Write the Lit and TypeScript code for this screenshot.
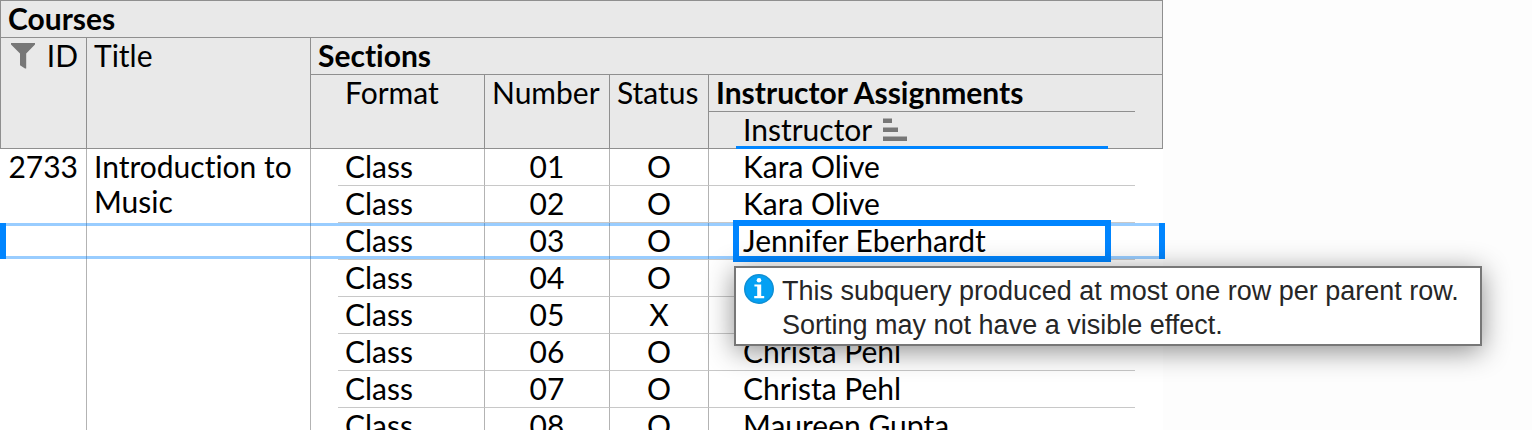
import { LitElement, html, css, nothing } from "lit";
import { customElement, state } from "lit/decorators.js";

interface Section {
  format: string;
  number: string;
  status: string;
  instructor: string;
}

@customElement("info-tip")
class InfoTip extends LitElement {
  static styles = css`
    :host {
      display: flex;
      gap: 8px;
      box-sizing: border-box;
      padding: 6px 21px 2px 8px;
      border: 2px solid #777;
      background: #fff;
      box-shadow: 0 5px 28px rgba(0, 0, 0, 0.45);
      color: #262626;
      font: 27px/34px "Liberation Sans", Arial, sans-serif;
      white-space: nowrap;
    }
    .icon {
      flex: none;
      width: 30px;
      height: 30px;
    }
  `;

  render() {
    return html`
      <svg class="icon" viewBox="0 0 30 30" aria-hidden="true">
        <circle cx="15" cy="15" r="14.25" fill="#04a0f3" stroke="#0f8fd4" stroke-width="1.5" />
        <circle cx="15" cy="6.3" r="2.3" fill="#fff" />
        <path d="M10.4 10.4H17.2V21.9H20.2V24.2H10.2V21.9H13.2V12.6H10.4Z" fill="#fff" />
      </svg>
      <div><slot></slot></div>
    `;
  }
}

@customElement("app-root")
class AppRoot extends LitElement {
  static styles = css`
    :host {
      display: block;
      height: 100vh;
      overflow: hidden;
      background: #fdfdfd;
      color: #000;
      font: 30px/35px Lato, Carlito, sans-serif;
      font-variant-ligatures: none;
      --accent: #0085ff;
      --head-line: #8f8f8f;
      --column-line: #b3b3b3;
      --row-line: #c8c8c8;
    }
    .grid {
      border-collapse: separate;
      border-spacing: 0;
      table-layout: fixed;
      width: 0;
      background: #fff;
    }
    .col-id { width: 87px; }
    .col-title { width: 224px; }
    .col-gutter { width: 27px; }
    .col-format { width: 147px; }
    .col-number { width: 125px; }
    .col-status { width: 99px; }
    .col-instructor { width: 372px; }
    .col-end { width: 28px; }

    th,
    td {
      box-sizing: border-box;
      height: 37px;
      padding: 0 7px;
      border: 0 solid var(--head-line);
      text-align: left;
      vertical-align: top;
      font-weight: 400;
      white-space: nowrap;
    }
    th {
      background: #e9e9e9;
      border-bottom-width: 1px;
    }
    .group { font-weight: 700; }
    .courses {
      height: 38px;
      border-width: 1px;
    }
    .edge { border-right-width: 1px; }
    .first { border-left-width: 1px; }
    .right {
      text-align: right;
      padding-right: 8px;
    }
    .center { text-align: center; }
    .indent { padding-left: 34px; }
    .pad { padding: 0; }
    .id-head {
      display: flex;
      justify-content: space-between;
      padding-left: 3px;
    }
    .filter {
      width: 24px;
      height: 26px;
      margin-top: 5px;
    }
    .sort-head {
      display: flex;
      gap: 11px;
      height: 34px;
    }
    .sort {
      width: 24px;
      height: 23px;
      margin-top: 6px;
    }
    .sorted { border-bottom: 3px solid var(--accent); }

    td { border-color: var(--row-line); }
    td.edge { border-right-color: var(--column-line); }
    .title { white-space: normal; }
    .ruled { border-bottom-width: 1px; }

    .selected,
    .focused { position: relative; }
    .row-mark,
    .cell-mark {
      position: absolute;
      box-sizing: border-box;
      pointer-events: none;
    }
    .row-mark {
      inset: 0 -2px 1px 0;
      border: solid rgba(0, 130, 255, 0.4);
      border-width: 3px 0;
    }
    .row-mark::before,
    .row-mark::after {
      content: "";
      position: absolute;
      top: -3px;
      bottom: -3px;
      width: 6px;
      background: var(--accent);
    }
    .row-mark::before { left: 0; }
    .row-mark::after { right: 0; }
    .focused { z-index: 1; background: #fff; }
    .cell-mark {
      inset: -3px;
      border: 6px solid var(--accent);
    }
    .tip {
      position: absolute;
      top: 43px;
      left: -2px;
    }
  `;

  @state() private selected = 2;

  private sections: Section[] = [
    { format: "Class", number: "01", status: "O", instructor: "Kara Olive" },
    { format: "Class", number: "02", status: "O", instructor: "Kara Olive" },
    { format: "Class", number: "03", status: "O", instructor: "Jennifer Eberhardt" },
    { format: "Class", number: "04", status: "O", instructor: "" },
    { format: "Class", number: "05", status: "X", instructor: "" },
    { format: "Class", number: "06", status: "O", instructor: "Christa Pehl" },
    { format: "Class", number: "07", status: "O", instructor: "Christa Pehl" },
    { format: "Class", number: "08", status: "O", instructor: "Maureen Gupta" },
  ];

  private row(s: Section, i: number) {
    const on = i === this.selected;
    return html`
      <tr class=${on ? "selected" : ""}>
        ${i === 0
          ? html`
              <td class="edge right" rowspan=${this.sections.length}>2733</td>
              <td class="edge title" rowspan=${this.sections.length}>Introduction to Music</td>
            `
          : nothing}
        <td class="pad"></td>
        <td class="ruled edge">${s.format}</td>
        <td class="ruled edge center">${s.number}</td>
        <td class="ruled edge center">${s.status}</td>
        <td class="ruled pad">${on ? html`<span class="row-mark"></span>` : nothing}</td>
        <td class="ruled ${on ? "focused" : ""}">${s.instructor}${on
            ? html`<span class="cell-mark"></span>
                <info-tip class="tip" role="tooltip">
                  This subquery produced at most one row per parent row.<br />Sorting may not have a
                  visible effect.
                </info-tip>`
            : nothing}</td>
        <td class="ruled pad"></td>
        <td class="pad"></td>
      </tr>
    `;
  }

  render() {
    return html`
      <table class="grid">
        <colgroup>
          <col class="col-id" />
          <col class="col-title" />
          <col class="col-gutter" />
          <col class="col-format" />
          <col class="col-number" />
          <col class="col-status" />
          <col class="col-gutter" />
          <col class="col-instructor" />
          <col class="col-gutter" />
          <col class="col-end" />
        </colgroup>
        <thead>
          <tr>
            <th class="group courses" colspan="10">Courses</th>
          </tr>
          <tr>
            <th class="first edge right" rowspan="3">
              <div class="id-head">
                <svg class="filter" viewBox="0 0 24 26" aria-label="Filtered">
                  <path d="M0 0H24V1.5L15.2 10.5V25.5H14L9 22.3V10.5L0 1.5Z" fill="#777" />
                </svg>
                <span>ID</span>
              </div>
            </th>
            <th class="edge" rowspan="3">Title</th>
            <th class="group edge" colspan="8">Sections</th>
          </tr>
          <tr>
            <th class="edge indent" colspan="2" rowspan="2">Format</th>
            <th class="edge" rowspan="2">Number</th>
            <th class="edge" rowspan="2">Status</th>
            <th class="group" colspan="3">Instructor Assignments</th>
            <th class="pad edge" rowspan="2"></th>
          </tr>
          <tr>
            <th class="pad"></th>
            <th class="sorted" aria-sort="ascending">
              <div class="sort-head">
                <span>Instructor</span>
                <svg class="sort" viewBox="0 0 24 23" aria-hidden="true">
                  <path d="M0 0H9V5H0ZM0 9H15V14H0ZM0 18H24V23H0Z" fill="#777" />
                  <path d="M0 0H9V1H0ZM0 9H15V10H0ZM0 18H24V19H0Z" fill="#b0b0b0" />
                </svg>
              </div>
            </th>
            <th class="pad"></th>
          </tr>
        </thead>
        <tbody>
          ${this.sections.map((s, i) => this.row(s, i))}
        </tbody>
      </table>
    `;
  }
}
